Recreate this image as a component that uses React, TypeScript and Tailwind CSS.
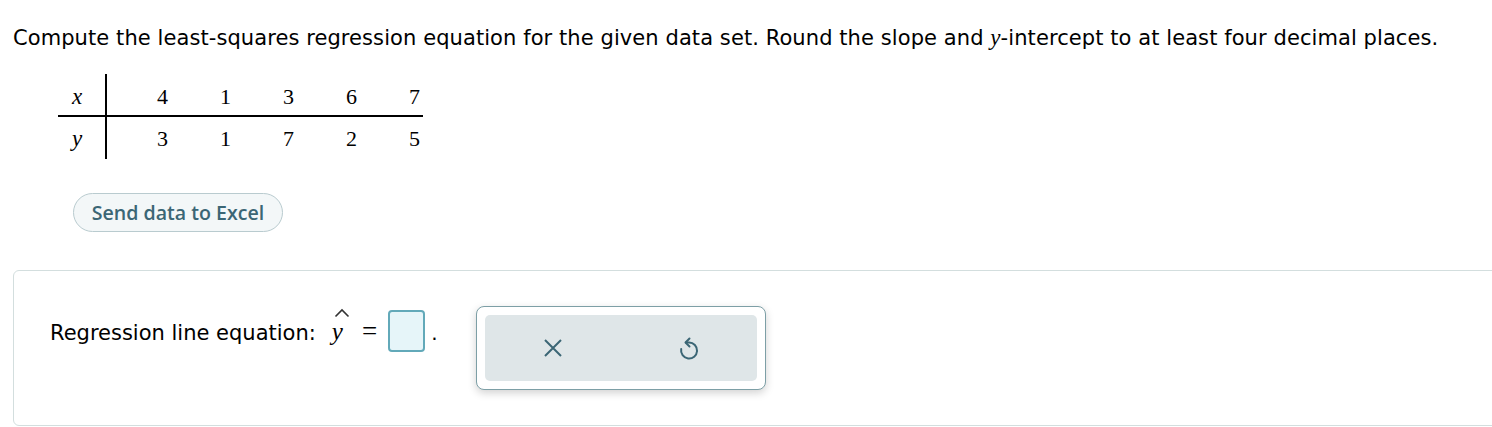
import React from "react";

const serif = { fontFamily: '"Liberation Serif", "Times New Roman", serif' };

export default function App() {
  const xs = [4, 1, 3, 6, 7];
  const ys = [3, 1, 7, 2, 5];
  return (
    <div className="w-[1492px] h-[427px] bg-white overflow-hidden relative" style={{ fontFamily: '"DejaVu Sans", Verdana, sans-serif' }}>
      <div className="pl-[13px] pt-[25px] text-[21px] tracking-[0.08px] text-black leading-[26px] whitespace-nowrap">
        Compute the least-squares regression equation for the given data set. Round the slope and{" "}
        <span className="italic text-[23px]" style={serif}>y</span>-intercept to at least four decimal places.
      </div>

      <div className="ml-[58px] mt-[23px] w-[365px]" style={serif}>
        <div className="flex h-[43px] items-end border-b-2 border-black">
          <div className="w-[49px] flex items-end h-full border-r-2 border-black pb-[6px] pl-[14px] italic text-[23px] leading-[24px]">x</div>
          {xs.map((v, i) => (
            <div key={i} className="w-[63px] text-right pr-[2px] pb-[6px] text-[22px] leading-[24px]">{v}</div>
          ))}
        </div>
        <div className="flex h-[42px] items-start">
          <div className="w-[49px] h-full border-r-2 border-black pt-[10px] pl-[14px] italic text-[23px] leading-[24px]">y</div>
          {xs.map((_, i) => (
            <div key={i} className="w-[63px] text-right pr-[2px] pt-[10px] text-[22px] leading-[24px]">{ys[i]}</div>
          ))}
        </div>
      </div>

      <div className="ml-[73px] mt-[34px]">
        <button className="h-[39px] w-[210px] rounded-full border border-[#b9cbcf] bg-[#f3f7f8] text-[#3b6675] text-[19.6px] font-semibold" style={{ fontFamily: '"Open Sans", Lato, sans-serif' }}>
          Send data to Excel
        </button>
      </div>

      <div className="ml-[13px] mt-[38px] w-[1500px] h-[156px] border border-[#d3dede] rounded-[6px] flex items-start">
        <div className="flex items-start mt-[35px] ml-[36px]">
          <span className="mt-[14px] text-[21px] leading-[26px] text-black mr-[16px]">Regression line equation:</span>
          <span className="mt-[12px] relative italic text-[25px] leading-[28px]" style={serif}>
            y
            <svg className="absolute left-[2px] top-[-10px]" width="16" height="10" viewBox="0 0 16 10">
              <path d="M1.5 8.5 L8 2 L14.5 8.5" fill="none" stroke="#333" strokeWidth="1.6" />
            </svg>
          </span>
          <span className="mt-[11px] ml-[19px] text-[27px] leading-[28px]" style={serif}>=</span>
          <span className="mt-[4px] ml-[11px] w-[37px] h-[42px] rounded-[4px] border-2 border-[#62a9b9] bg-[#e6f5f9] inline-block"></span>
          <span className="mt-[15px] ml-[6px] text-[20px] leading-[24px]">.</span>
          <div className="ml-[38px] w-[290px] h-[84px] rounded-[8px] border border-[#7d9fa6] bg-white shadow-[0_3px_8px_rgba(0,0,0,0.18)] p-[8px]">
            <div className="w-full h-full rounded-[5px] bg-[#dfe6e8] flex items-center">
              <div className="w-[136px] flex justify-center">
                <svg width="20" height="20" viewBox="0 0 20 20">
                  <path d="M2 2 L18 18 M18 2 L2 18" stroke="#3b6675" strokeWidth="2" fill="none" />
                </svg>
              </div>
              <div className="w-[136px] flex justify-center">
                <svg width="20" height="24" viewBox="0 0 20 24">
                  <path d="M7 6.5 L10 6.5 A8 8 0 1 1 2.2 13" stroke="#3b6675" strokeWidth="2" fill="none" strokeLinecap="round" />
                  <path d="M10.5 2.5 L6.5 6.5 L10.5 10.5" stroke="#3b6675" strokeWidth="2" fill="none" strokeLinecap="round" strokeLinejoin="round" />
                </svg>
              </div>
            </div>
          </div>
        </div>
      </div>
    </div>
  );
}
